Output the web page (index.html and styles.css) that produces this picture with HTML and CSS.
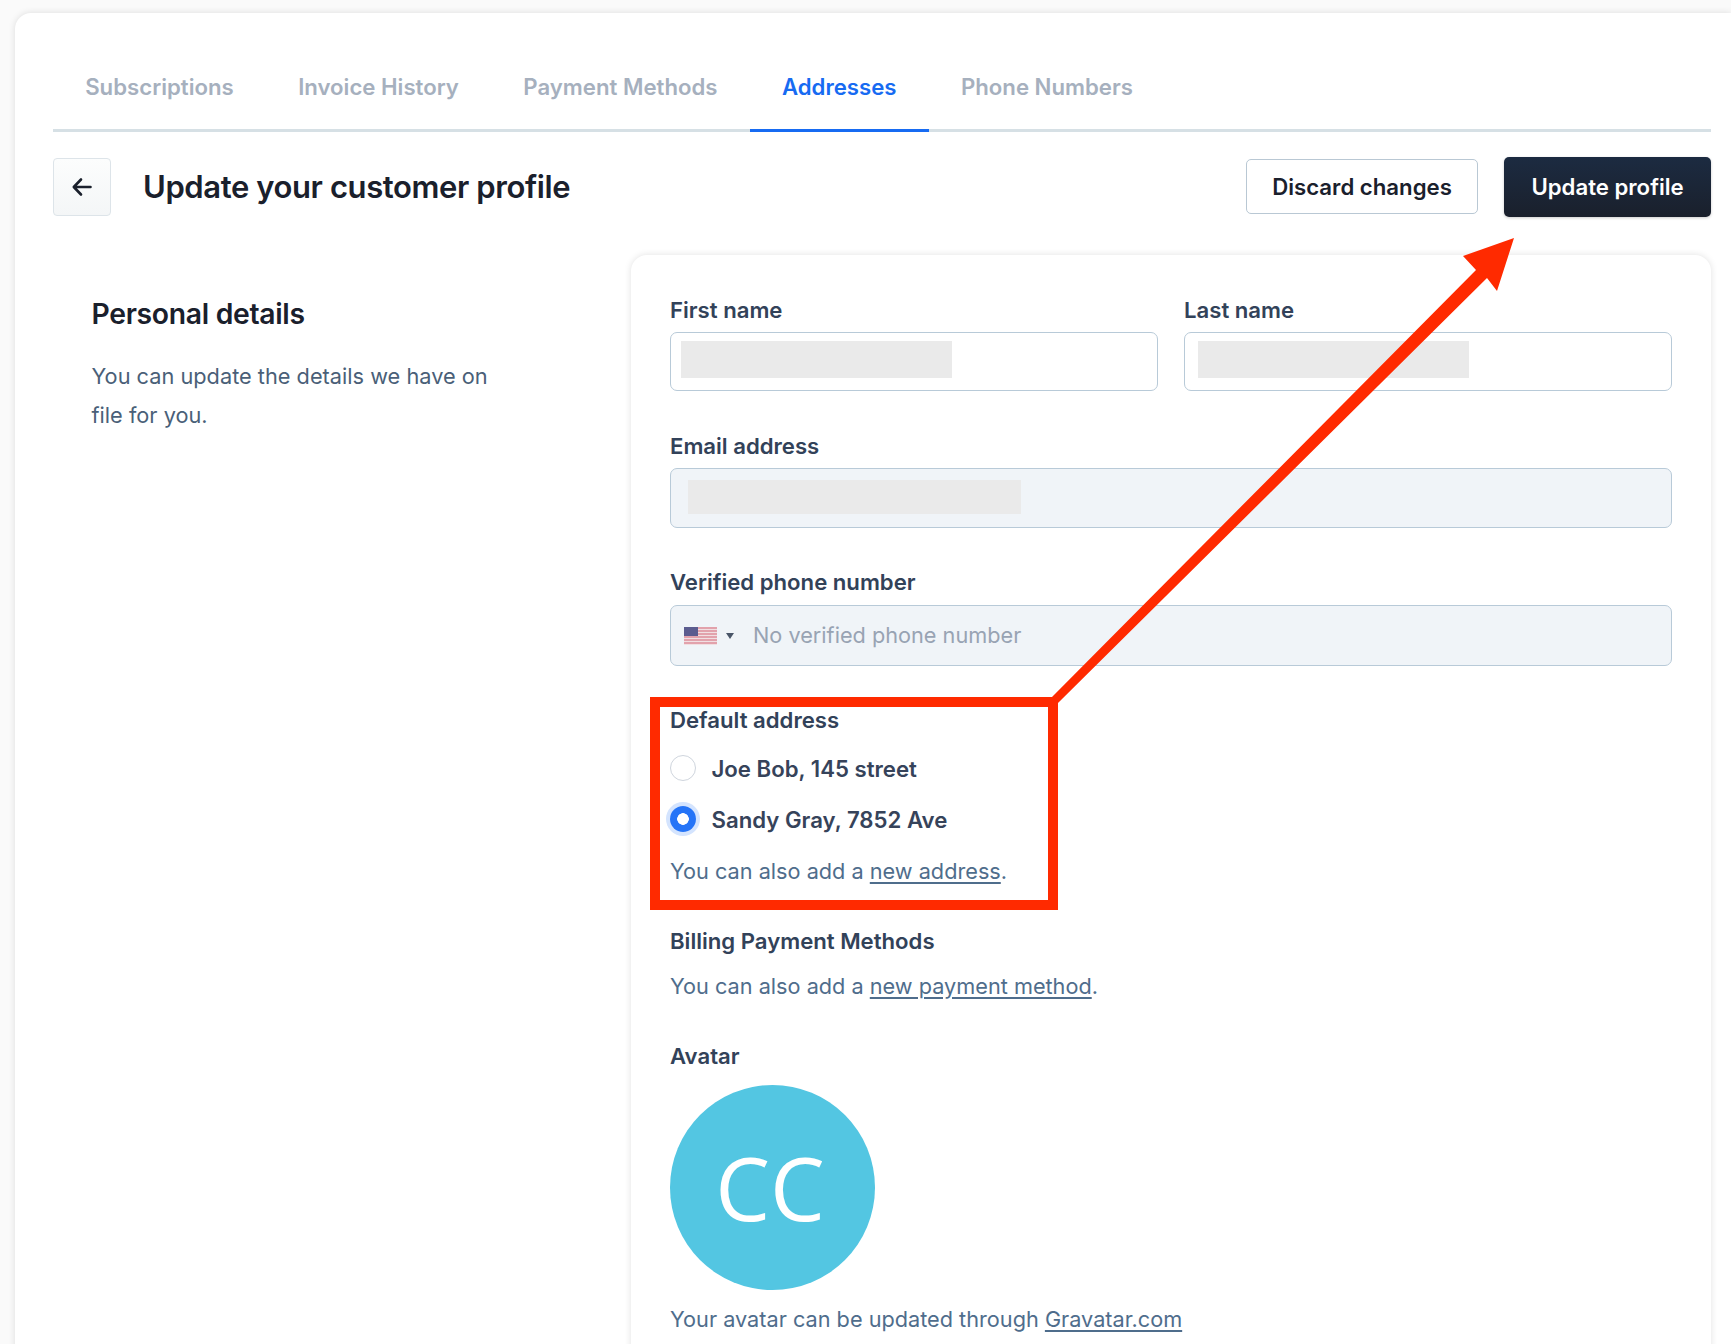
FILE: index.html
```html
<!DOCTYPE html>
<html lang="en">
<head>
<meta charset="utf-8">
<title>Update your customer profile</title>
<link rel="stylesheet" href="styles.css">
</head>
<body>
<div class="panel">
  <nav class="tabs">
    <a class="tab">Subscriptions</a>
    <a class="tab">Invoice History</a>
    <a class="tab">Payment Methods</a>
    <a class="tab active">Addresses</a>
    <a class="tab">Phone Numbers</a>
  </nav>
  <header class="head">
    <button class="back" aria-label="Back">
      <svg width="22" height="22" viewBox="0 0 22 22" fill="none" stroke="#1a202c" stroke-width="2.6" stroke-linecap="round" stroke-linejoin="round"><path d="M10 3.5 2.8 11l7.2 7.5M3 11h16.5"/></svg>
    </button>
    <h1 class="title">Update your customer profile</h1>
    <div class="actions">
      <button class="btn ghost">Discard changes</button>
      <button class="btn primary">Update profile</button>
    </div>
  </header>
  <div class="columns">
    <aside class="intro">
      <h2>Personal details</h2>
      <p>You can update the details we have on file for you.</p>
    </aside>
    <form class="card">
      <div class="row">
        <div class="field">
          <label>First name</label>
          <div class="input"><span class="redact r-first"></span></div>
        </div>
        <div class="field">
          <label>Last name</label>
          <div class="input"><span class="redact r-last"></span></div>
        </div>
      </div>
      <div class="field email">
        <label>Email address</label>
        <div class="input disabled"><span class="redact r-email"></span></div>
      </div>
      <div class="field">
        <label>Verified phone number</label>
        <div class="input disabled phone">
          <svg class="flag" width="33" height="18" viewBox="0 0 33 18">
            <rect width="33" height="18" fill="#f1dfe2"/>
            <path d="M0 1h33M0 4h33M0 7h33M0 10h33M0 13h33M0 16h33" stroke="#dd8f9b" stroke-width="1.5"/>
            <rect width="14" height="9" fill="#5b5c8f"/>
          </svg>
          <span class="caret"></span>
          <span class="placeholder">No verified phone number</span>
        </div>
      </div>
      <div class="group address">
        <div class="label">Default address</div>
        <div class="radio"><span class="dot"></span>Joe Bob, 145 street</div>
        <div class="radio"><span class="dot on"></span>Sandy Gray, 7852 Ave</div>
        <p class="note">You can also add a <a>new address</a>.</p>
      </div>
      <div class="group billing">
        <div class="label">Billing Payment Methods</div>
        <p class="note">You can also add a <a>new payment method</a>.</p>
      </div>
      <div class="group avatar-group">
        <div class="label">Avatar</div>
        <div class="avatar">CC</div>
        <p class="note">Your avatar can be updated through <a>Gravatar.com</a></p>
      </div>
    </form>
  </div>
</div>
<div class="red-box"></div>
<svg class="arrow" width="1731" height="1344" viewBox="0 0 1731 1344">
  <path fill="#ff2a00" d="M1514 238 1463 256 1476 270 1052 697 1058 703 1487 278 1497 291Z"/>
</svg>
</body>
</html>
```
FILE: styles.css
```css
* { box-sizing: border-box; }
html, body { margin: 0; height: 1344px; overflow: hidden; }
body {
  background: #fafafa;
  font-family: Inter, "Liberation Sans", sans-serif;
  color: #2d3748;
  position: relative;
}
.panel {
  margin: 13px 0 0 15px;
  height: 1400px;
  padding: 40px 20px 0 38px;
  background: #fff;
  border-radius: 16px 0 0 0;
  box-shadow: 0 0 7px rgba(0, 0, 0, .12);
}
.tabs {
  display: flex;
  height: 79px;
  border-bottom: 3px solid #d6e0e5;
}
.tab {
  padding: 0 32.2px;
  height: 79px;
  line-height: 68px;
  font-size: 22.2px;
  font-weight: 600;
  color: #a6b0be;
}
.tab.active { color: #176bf2; border-bottom: 3px solid #176bf2; }
.head {
  display: flex;
  align-items: center;
  height: 59px;
  margin-top: 25px;
}
.back {
  width: 58px;
  height: 58px;
  padding: 0;
  display: flex;
  align-items: center;
  justify-content: center;
  background: linear-gradient(#fcfdfd, #f4f6f7);
  border: 1px solid #dde4e9;
  border-radius: 4px;
}
.title {
  margin: 0 0 0 32px;
  font-size: 31px;
  font-weight: 600;
  color: #1a202c;
  letter-spacing: -.4px;
}
.actions { margin-left: auto; display: flex; align-items: center; gap: 26px; }
.btn {
  font-family: inherit;
  font-size: 22.2px;
  font-weight: 600;
  border-radius: 5px;
}
.ghost {
  width: 232px;
  height: 55px;
  background: #fff;
  color: #1a202c;
  border: 1px solid #b9c8d4;
}
.primary {
  width: 207px;
  height: 60px;
  color: #fff;
  border: 0;
  background: linear-gradient(#1c2b41, #1a202c);
  box-shadow: 0 1px 3px rgba(0, 0, 0, .2);
}
.columns { display: flex; margin-top: 39px; }
.intro { width: 578px; padding: 41px 0 0 38.5px; flex: none; }
.intro h2 {
  margin: 0;
  font-size: 28.3px;
  line-height: 36px;
  font-weight: 600;
  color: #1a202c;
  letter-spacing: -.3px;
}
.intro p {
  margin: 25px 0 0;
  width: 420px;
  font-size: 21.75px;
  line-height: 39px;
  color: #4a5f78;
}
.card {
  flex: 1;
  height: 1200px;
  padding: 39px 39px 0;
  background: #fff;
  border-radius: 16px;
  box-shadow: 0 0 7px rgba(0, 0, 0, .12);
}
.row { display: flex; gap: 26px; }
.row .field { flex: 1; margin-bottom: 39px; }
.field { margin-bottom: 41px; }
.field.email { margin-bottom: 38px; }
label, .label {
  display: block;
  font-size: 22.15px;
  line-height: 32px;
  font-weight: 600;
  color: #324259;
}
.input {
  margin-top: 6px;
  height: 59px;
  background: #fff;
  border: 1px solid #b8cad8;
  border-radius: 7px;
  display: flex;
  align-items: center;
}
.input.disabled { background: #f0f4f8; height: 60px; }
.redact { display: block; background: #eaeaea; height: 37px; margin-bottom: 4px; }
.r-first { width: 271px; margin-left: 10px; }
.r-last { width: 271px; margin-left: 13px; }
.r-email { width: 333px; height: 34px; margin: 0 0 2px 17px; }
.input.phone { height: 61px; margin-top: 7px; padding-left: 13px; }
.flag { flex: none; }
.caret {
  margin-left: 9px;
  border: 4px solid transparent;
  border-top: 6px solid #4a5568;
  border-bottom: 0;
}
.placeholder { margin: 0 0 2px 19px; font-size: 21.7px; color: #98a3b3; }
.address { margin-top: -2px; }
.label { line-height: 30px; }
.radio {
  display: flex;
  align-items: center;
  gap: 15.5px;
  height: 26px;
  margin-top: 20px;
  font-size: 22.2px;
  font-weight: 600;
  color: #36435a;
}
.radio + .radio { margin-top: 25px; }
.dot {
  width: 26px;
  height: 26px;
  border-radius: 50%;
  border: 1px solid #cfd5dd;
  background: #fff;
  flex: none;
}
.dot.on {
  border: 0;
  background: radial-gradient(circle, #fff 0 5.5px, #2574f7 6.1px);
  box-shadow: 0 0 0 4px #d4e4fe;
}
.note {
  margin: 0;
  font-size: 21.7px;
  line-height: 32px;
  color: #4f6d8c;
}
.note a { text-decoration: underline; text-underline-offset: 3px; }
.address .note { margin-top: 23px; }
.billing { margin-top: 39px; }
.billing .note { margin-top: 14px; }
.avatar-group { margin-top: 39px; }
.avatar {
  width: 205px;
  height: 205px;
  margin-top: 14px;
  padding-right: 5px;
  border-radius: 50%;
  background: #53c6e2;
  color: #fff;
  font-family: "Open Sans", sans-serif;
  font-size: 87px;
  line-height: 205px;
  text-align: center;
}
.avatar-group .note { margin-top: 13px; }
.red-box {
  position: absolute;
  left: 650px;
  top: 697px;
  width: 408px;
  height: 213px;
  border: 10px solid #ff2a00;
}
.arrow { position: absolute; left: 0; top: 0; pointer-events: none; }
```
